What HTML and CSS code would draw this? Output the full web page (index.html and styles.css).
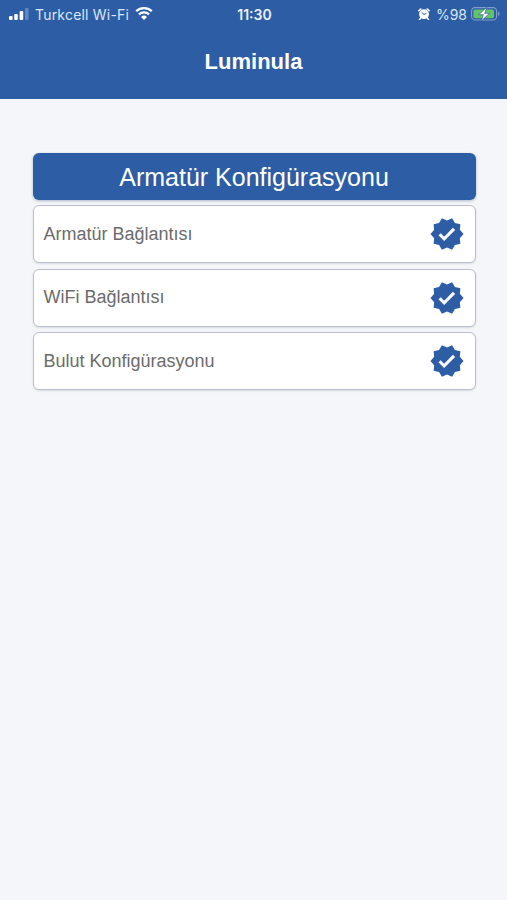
FILE: index.html
```html
<!DOCTYPE html>
<html lang="tr">
<head>
<meta charset="utf-8">
<title>Luminula</title>
<link rel="stylesheet" href="styles.css">
</head>
<body>
<svg class="defs" aria-hidden="true">
  <symbol id="verified" viewBox="0 0 24 24"><path d="M23 12l-2.44-2.79.34-3.69-3.61-.82L15.4 1.5 12 2.96 8.6 1.5 6.71 4.69 3.1 5.5l.34 3.7L1 12l2.44 2.79-.34 3.7 3.61.82L8.6 22.5l3.4-1.47 3.4 1.46 1.89-3.19 3.61-.82-.34-3.69L23 12zM10.09 16.72l-3.8-3.81 1.48-1.48 2.32 2.33 5.85-5.87 1.48 1.48-7.33 7.35z"/></symbol>
</svg>
<header class="header">
  <div class="status">
    <div class="status-side">
      <svg class="signal" viewBox="0 0 20 12"><rect x="0" y="8" width="3.6" height="4" rx="1"/><rect x="5.2" y="6" width="3.6" height="6" rx="1"/><rect x="10.6" y="3" width="3.6" height="9" rx="1"/><rect class="dim" x="16" y="0" width="3.6" height="12" rx="1"/></svg>
      <span class="carrier">Turkcell Wi-Fi</span>
      <svg class="wifi" viewBox="0 0 18 14"><path d="M1.2 5.2a11.3 11.3 0 0 1 15.6 0M4 8.3a7.3 7.3 0 0 1 10 0"/><path class="dot" d="M9 14l-3-3.1a4.3 4.3 0 0 1 6 0z"/></svg>
    </div>
    <span class="time">11:30</span>
    <div class="status-side status-right">
      <svg class="alarm" viewBox="0 0 12 12"><circle cx="6" cy="6.2" r="4.9"/><path class="ears" d="M.9 2.7 2.8 1M11.1 2.7 9.2 1M2.5 10.2l-1 1.2M9.5 10.2l1 1.2"/><path class="hands" d="M3.7 4.3 6 6.5l2.3-1.2"/></svg>
      <span class="percent">%98</span>
      <svg class="battery" viewBox="0 0 29 16"><rect class="shell" x=".6" y="1.6" width="25" height="12.4" rx="3.6"/><rect class="charge" x="2.4" y="3.4" width="20.6" height="8.8" rx="2"/><path class="tip" d="M27 5.6q1.7.7 1.7 2.2T27 10z"/><path class="bolt" d="M15.8 1.2 7.6 8.7h4.7l-2 6.2 8.3-7.6h-4.8z"/></svg>
    </div>
  </div>
  <h1 class="title">Luminula</h1>
</header>
<main class="content">
  <h2 class="banner">Armatür Konfigürasyonu</h2>
  <div class="card"><span>Armatür Bağlantısı</span><svg class="badge"><use href="#verified"/></svg></div>
  <div class="card"><span>WiFi Bağlantısı</span><svg class="badge"><use href="#verified"/></svg></div>
  <div class="card"><span>Bulut Konfigürasyonu</span><svg class="badge"><use href="#verified"/></svg></div>
</main>
</body>
</html>
```
FILE: styles.css
```css
* { box-sizing: border-box; }
body {
  margin: 0;
  min-height: 100vh;
  background: #f4f6f9;
  font-family: "Liberation Sans", Arial, sans-serif;
}
.defs { display: none; }
.header {
  height: 98.5px;
  background: #2d5da5;
  color: #fff;
}
.status {
  display: grid;
  grid-template-columns: 1fr auto 1fr;
  align-items: center;
  height: 28px;
  padding: 0 7px 0 9px;
  font-family: Inter, sans-serif;
  font-size: 14px;
  color: #d9e6f7;
}
.status-side { display: flex; align-items: center; }
.status-right { justify-content: flex-end; }
.signal { width: 20px; height: 12px; fill: #fff; }
.signal .dim { fill: #6088c0; }
.carrier { margin-left: 6px; letter-spacing: 0.2px; white-space: nowrap; }
.wifi { width: 18px; height: 14px; margin: -3px 0 0 6px; fill: none; stroke: #fff; stroke-width: 2.3; }
.wifi .dot { fill: #fff; stroke: none; }
.time { font-weight: 600; color: #e8f1fc; }
.alarm { width: 12px; height: 12px; fill: #fff; }
.alarm .ears { stroke: #fff; stroke-width: 1.6; stroke-linecap: round; }
.alarm .hands { fill: none; stroke: #2d5da5; stroke-width: 1; }
.percent { margin-left: 6px; }
.battery { width: 29px; height: 16px; margin-left: 4px; }
.shell { fill: none; stroke: #829fcb; stroke-width: 1.1; }
.charge { fill: #62c466; }
.tip { fill: #829fcb; }
.bolt { fill: #fff; stroke: #2d5da5; stroke-width: 0.7; }
.title {
  margin: 20px 0 0;
  text-align: center;
  font-size: 22px;
  line-height: 28px;
  font-weight: 700;
}
.content {
  display: flex;
  flex-direction: column;
  gap: 5.2px;
  padding: 54px 31.5px 0 32.5px;
}
.banner {
  margin: 0;
  height: 47.5px;
  border-radius: 6px;
  background: #2d5da5;
  box-shadow: 0 1px 3px rgba(40, 60, 110, 0.35);
  color: #fff;
  text-align: center;
  font-size: 25px;
  line-height: 48px;
  font-weight: 400;
}
.card {
  display: flex;
  align-items: center;
  justify-content: space-between;
  height: 58.3px;
  padding: 0 10px;
  border: 1px solid #bcbfcb;
  border-radius: 6px;
  background: #fff;
  box-shadow: 0 1px 2px rgba(60, 70, 100, 0.15);
  color: #6b6b6b;
  font-size: 18px;
}
.badge { width: 36px; height: 36px; fill: #2d5da5; }
```
